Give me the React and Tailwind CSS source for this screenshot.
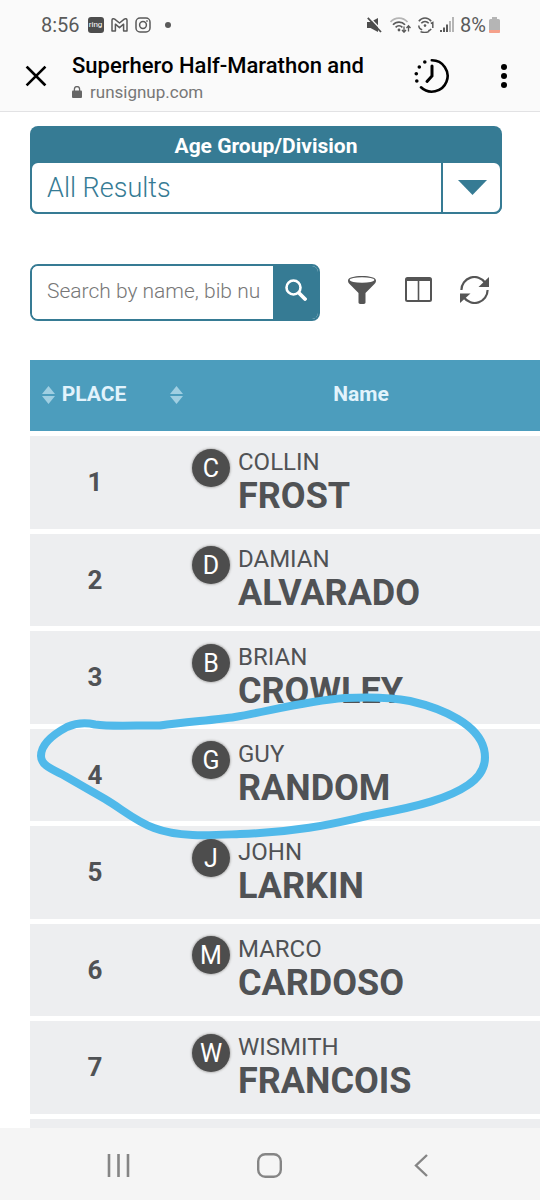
import React from 'react';

const results = [
    { place: 1, first: 'COLLIN', last: 'FROST' },
    { place: 2, first: 'DAMIAN', last: 'ALVARADO' },
    { place: 3, first: 'BRIAN', last: 'CROWLEY' },
    { place: 4, first: 'GUY', last: 'RANDOM' },
    { place: 5, first: 'JOHN', last: 'LARKIN' },
    { place: 6, first: 'MARCO', last: 'CARDOSO' },
    { place: 7, first: 'WISMITH', last: 'FRANCOIS' },
];

const StatusBar = () => (
    <div className="flex h-12 items-center justify-between pl-[41px] pr-10 pt-[2px] text-[#5a5a5a]">
        <div className="flex items-center">
            <span className="text-xl">8:56</span>
            <span className="ml-2 flex size-4 items-center justify-center rounded-[3px] bg-[#4d4d4d] text-[8px] leading-none text-white">ring</span>
            <svg className="ml-[7px] h-4 w-[17px]" viewBox="0 0 17 16" fill="none" stroke="currentColor" strokeWidth="1.5" strokeLinejoin="round">
                <path d="M1 14V3.2C1 1.7 2.6 1.2 3.7 2.1L8.5 6l4.8-3.9C14.4 1.2 16 1.7 16 3.2V14h-3.4V7.2L8.5 10.6 4.4 7.2V14Z" />
            </svg>
            <svg className="ml-[7px] size-4" viewBox="0 0 16 16" fill="none" stroke="currentColor" strokeWidth="1.5">
                <rect x="1" y="1" width="14" height="14" rx="4" />
                <circle cx="8" cy="8" r="3.4" />
                <circle cx="12" cy="4" r=".6" fill="currentColor" strokeWidth=".6" />
            </svg>
            <span className="ml-[14px] size-[6px] rounded-full bg-[#5a5a5a]"></span>
        </div>
        <div className="flex items-center">
            <svg className="h-4 w-[15px]" viewBox="0 0 15 16">
                <path d="M0 5h3.5L11 1v14L3.5 11H0Z" fill="#4d4d4d" />
                <path d="M2 0 15 13.500" stroke="#fafafa" strokeWidth="1.500" />
                <path d="M.8.8 14 15" stroke="#4d4d4d" strokeWidth="1.8" />
            </svg>
            <svg className="ml-2 h-4 w-[21px]" viewBox="0 0 21 16" fill="none" strokeWidth="1.7">
                <path d="M.5 5C5-.3 13-.3 17.5 5" stroke="#b5b5b5" />
                <path d="M3 7.800c3.200-3.700 8.800-3.700 12 0M5.600 10.400c2-2 4.800-2 6.800 0" stroke="#5a5a5a" />
                <circle cx="9" cy="13" r="1.4" fill="#5a5a5a" />
                <path d="M14 9.500V15M12 13l2 2.200L16 13M18.500 14.500V9M16.500 11l2-2.200 2 2.200" stroke="#5a5a5a" strokeWidth="1.3" />
            </svg>
            <svg className="ml-[7px] h-4 w-4" viewBox="0 0 16 16" fill="none" stroke="#5a5a5a" strokeWidth="1.5">
                <path d="M.8 4.200C4-.2 10-.2 13.200 4.200M3.300 6.300c2-2.500 5.400-2.500 7.400 0" />
                <circle cx="7" cy="8.600" r="1.3" fill="#5a5a5a" stroke="none" />
                <path d="M.8 8.500c0 2 1.400 3.700 3.400 4.300M13.200 12c-.8 1-1.800 1.500-3 1.800M2.500 14.600c3 1.200 6.500 1 9-.4M12.800 6.500l2-1V11" />
            </svg>
            <svg className="ml-[6px] h-4 w-[14px]" viewBox="0 0 14 16" fill="#5a5a5a">
                <rect x="0" y="13" width="2" height="2" />
                <rect x="3" y="10.500" width="2" height="4.500" />
                <rect x="6" y="7.500" width="2" height="7.500" />
                <rect x="9" y="4" width="2" height="11" fill="#b5b5b5" />
                <rect x="12" y="0" width="2" height="15" fill="#b5b5b5" />
            </svg>
            <span className="ml-[6px] text-xl">8%</span>
            <svg className="ml-[3px] h-4 w-[11px]" viewBox="0 0 11 16">
                <path d="M3 0h5v2h1.500Q11 2 11 3.500v11Q11 16 9.500 16h-8Q0 16 0 14.500v-11Q0 2 1.500 2H3Z" fill="#b5b5b5" />
                <path d="M0 13h11v1.500Q11 16 9.500 16h-8Q0 16 0 14.500Z" fill="#f5a08a" />
            </svg>
        </div>
    </div>
);

const BrowserBar = () => (
    <div className="flex h-[63px] items-center pl-6 pr-8">
        <button aria-label="Close tab" className="mt-[-8px] shrink-0">
            <svg className="size-6" viewBox="0 0 24 24" stroke="#000" strokeWidth="2.6" strokeLinecap="square">
                <path d="M3.500 3.500l17 17M20.500 3.500l-17 17" />
            </svg>
        </button>
        <div className="ml-6 min-w-0 flex-1 self-start pt-1">
            <h1 className="truncate text-[22px] font-medium leading-7 text-black">Superhero Half-Marathon and</h1>
            <p className="flex items-center text-[17px] leading-6 text-[#777]">
                <svg className="mr-2 h-3 w-[10px]" viewBox="0 0 10 12">
                    <rect y="4.500" width="10" height="7.500" rx="1" fill="#666" />
                    <path d="M2.400 5V3.200a2.600 2.600 0 0 1 5.200 0V5" fill="none" stroke="#666" strokeWidth="1.3" />
                </svg>
                runsignup.com
            </p>
        </div>
        <button aria-label="History" className="mt-[-8px] shrink-0">
            <svg className="h-9 w-9" viewBox="0 0 36 36" fill="none" stroke="#000" strokeWidth="2.6" strokeLinecap="round">
                <path d="M17.800 2.300A15.700 15.700 0 1 1 7 29.300" />
                <path d="M18 8v10l-5 5.500" strokeWidth="3" />
                <g fill="#000" stroke="none">
                    <circle cx="10.800" cy="4" r="1.8" />
                    <circle cx="5.300" cy="9" r="1.8" />
                    <circle cx="2.300" cy="15.700" r="1.8" />
                    <circle cx="2.800" cy="23" r="1.8" />
                </g>
            </svg>
        </button>
        <button aria-label="More options" className="ml-[50px] mt-[-8px] shrink-0">
            <svg className="h-6 w-2" viewBox="0 0 8 24">
                <circle cx="4" cy="3" r="3" />
                <circle cx="4" cy="12" r="3" />
                <circle cx="4" cy="21" r="3" />
            </svg>
        </button>
    </div>
);

const DivisionPicker = () => (
    <div className="mr-[38px] rounded-lg bg-[#367b94]">
        <label htmlFor="division" className="block h-[35px] pt-[6px] text-center text-[21px] font-bold leading-7 text-white">
            Age Group/Division
        </label>
        <div className="relative">
            <select id="division" className="block h-[53px] w-full appearance-none rounded-lg border-2 border-[#367b94] bg-white pl-[15px] pr-16 pt-[2px] text-[27px] font-light text-[#367b94]">
                <option>All Results</option>
            </select>
            <div className="pointer-events-none absolute inset-y-0 right-0 flex w-[61px] items-center justify-center border-l-2 border-[#367b94]">
                <svg className="h-[15px] w-[29px]" viewBox="0 0 29 15" fill="#367b94">
                    <path d="M0 0h29L14.500 15Z" />
                </svg>
            </div>
        </div>
    </div>
);

const Toolbar = () => (
    <div className="mr-[51px] mt-[50px] flex items-center justify-between">
        <form className="flex h-[57px] w-[290px] overflow-hidden rounded-lg border-2 border-[#367b94]">
            <input
                type="text"
                aria-label="Search"
                placeholder="Search by name, bib nu"
                className="min-w-0 flex-1 bg-white pb-[2px] pl-[15px] text-[21px] font-light text-[#555] placeholder:text-[#777]"
            />
            <button type="button" aria-label="Submit search" className="flex w-[45px] items-center justify-center bg-[#367b94] pb-[6px]">
                <svg className="size-[22px]" viewBox="0 0 22 22" fill="none" stroke="#fff">
                    <circle cx="8.500" cy="8.500" r="7" strokeWidth="2.6" />
                    <path d="M14 14l6 6" strokeWidth="3.8" strokeLinecap="round" />
                </svg>
            </button>
        </form>
        <button aria-label="Filter" className="pb-[6px]">
            <svg className="h-7 w-7" viewBox="0 0 28 28">
                <path d="M0 4.500C0 1.500 6 0 14 0s14 1.500 14 4.500c0 1.800-.8 2.700-1.800 3.700L17.500 17v9.500Q17.500 28 14 28t-3.500-1.500V17L1.800 8.200C.8 7.200 0 6.300 0 4.500Z" fill="#555" />
                <ellipse cx="14" cy="4" rx="12.300" ry="2.700" fill="#fff" />
            </svg>
        </button>
        <button aria-label="Columns" className="pb-[6px]">
            <svg className="h-[25px] w-[27px]" viewBox="0 0 27 25" fill="none" stroke="#555" strokeWidth="2">
                <rect x="1" y="1" width="25" height="23" rx="1.500" />
                <path d="M1 2.500h25" strokeWidth="3" />
                <path d="M13.500 3v21" strokeWidth="1.6" />
            </svg>
        </button>
        <button aria-label="Refresh" className="pb-[6px]">
            <svg className="h-7 w-[29px]" viewBox="0 0 29 28" fill="none" stroke="#555" strokeWidth="2.2">
                <path d="M1.400 14A13 13 0 0 1 25 6.500" />
                <path d="M27.600 14A13 13 0 0 1 4 21.500" />
                <path d="M29 1v10H18.500Z" fill="#555" stroke="none" />
                <path d="M0 27V17.500h10.500Z" fill="#555" stroke="none" />
            </svg>
        </button>
    </div>
);

const SortButton = ({ label }) => (
    <button aria-label={label} className="absolute left-3 top-[26px]">
        <svg className="h-[18px] w-[13px]" viewBox="0 0 13 18" fill="#a0cfe2">
            <path d="M0 8 6.500 0 13 8Z" />
            <path d="M0 10h13L6.500 18Z" />
        </svg>
    </button>
);

const ResultsTable = () => (
    <table className="mt-[34px] w-[calc(100%+24px)] table-fixed border-separate border-spacing-x-0 border-spacing-y-[5px] text-[#505255]">
        <thead>
            <tr className="h-[71px] bg-[#4c9dbd] text-[21px] text-[#e2f3fc]">
                <th className="relative w-32 pb-[2px] font-bold">
                    <SortButton label="Sort by place" />
                    PLACE
                </th>
                <th className="relative pb-[2px] font-bold">
                    <SortButton label="Sort by name" />
                    Name
                </th>
            </tr>
        </thead>
        <tbody>
            {results.map((r) => (
                <tr key={r.place} className="h-[92px] bg-[#edeef0] odd:h-[93px]">
                    <td className="pl-[2px] text-center text-[26px] font-bold">{r.place}</td>
                    <td className="pb-[2px] pl-[34px]">
                        <div className="flex gap-2">
                            <span className="mt-px flex size-[38px] items-center justify-center rounded-full bg-[#4d4d4d] pt-[2px] text-[25px] text-white shadow-[0_0_2px_1px_#bbb]">
                                {r.first[0]}
                            </span>
                            <div>
                                <div className="text-2xl leading-7">{r.first}</div>
                                <div className="text-4xl font-bold leading-10">{r.last}</div>
                            </div>
                        </div>
                    </td>
                </tr>
            ))}
            {/* Next row peeks out above the navigation bar */}
            <tr className="h-[92px] bg-[#edeef0]">
                <td></td>
                <td></td>
            </tr>
        </tbody>
    </table>
);

const MarkerCircle = () => (
    <svg
        className="pointer-events-none absolute left-9 top-[580px] h-[150px] w-[456px]"
        viewBox="36 692 456 150"
        fill="none"
        stroke="#50b9ea"
        strokeWidth="8"
        strokeLinecap="round"
        strokeLinejoin="round"
    >
        <path d="M95 724.500C85 722 76 723 67 727C52 735 41 745 41 756C41 766 54 770 65 776L105 799C122 809 135 821 154 828C180 838 215 835 240 834C310 832 350 819 377 814C420 806 449 798 468 785C483 775 487 762 484 749C478 725 445 709 410 701C390 697 365 697 345 698C305 701 270 711 235 717C215 720 185 722 160 725.500C140 725 112 727 95 724.500Z" />
    </svg>
);

const NavBar = () => (
    <nav className="flex h-[72px] shrink-0 bg-[#f5f5f5] px-[43px] pt-[2px]">
        <button aria-label="Recent apps" className="flex flex-1 items-center justify-center">
            <svg className="h-[23px] w-[23px]" viewBox="0 0 23 23" stroke="#858585" strokeWidth="2.6">
                <path d="M2 0v23M11.500 0v23M21 0v23" />
            </svg>
        </button>
        <button aria-label="Home" className="flex flex-1 items-center justify-center">
            <svg className="size-[25px]" viewBox="0 0 25 25" fill="none" stroke="#858585" strokeWidth="2.4">
                <rect x="1.200" y="1.200" width="22.600" height="22.600" rx="7" />
            </svg>
        </button>
        <button aria-label="Back" className="flex flex-1 items-center justify-center">
            <svg className="h-[23px] w-[14px]" viewBox="0 0 14 23" fill="none" stroke="#858585" strokeWidth="2.4">
                <path d="M13 1 2 11.500 13 22" />
            </svg>
        </button>
    </nav>
);

const App = () => {
    return (
        <div className="flex h-screen flex-col overflow-hidden bg-white font-[Roboto,sans-serif]">
            <header className="shrink-0 border-b border-[#e2e2e4] bg-[#fafafa]">
                <StatusBar />
                <BrowserBar />
            </header>
            <main className="relative min-h-0 flex-1 overflow-hidden pl-[30px] pt-[14px]">
                <DivisionPicker />
                <Toolbar />
                <ResultsTable />
                <MarkerCircle />
            </main>
            <NavBar />
        </div>
    );
};

export default App;
